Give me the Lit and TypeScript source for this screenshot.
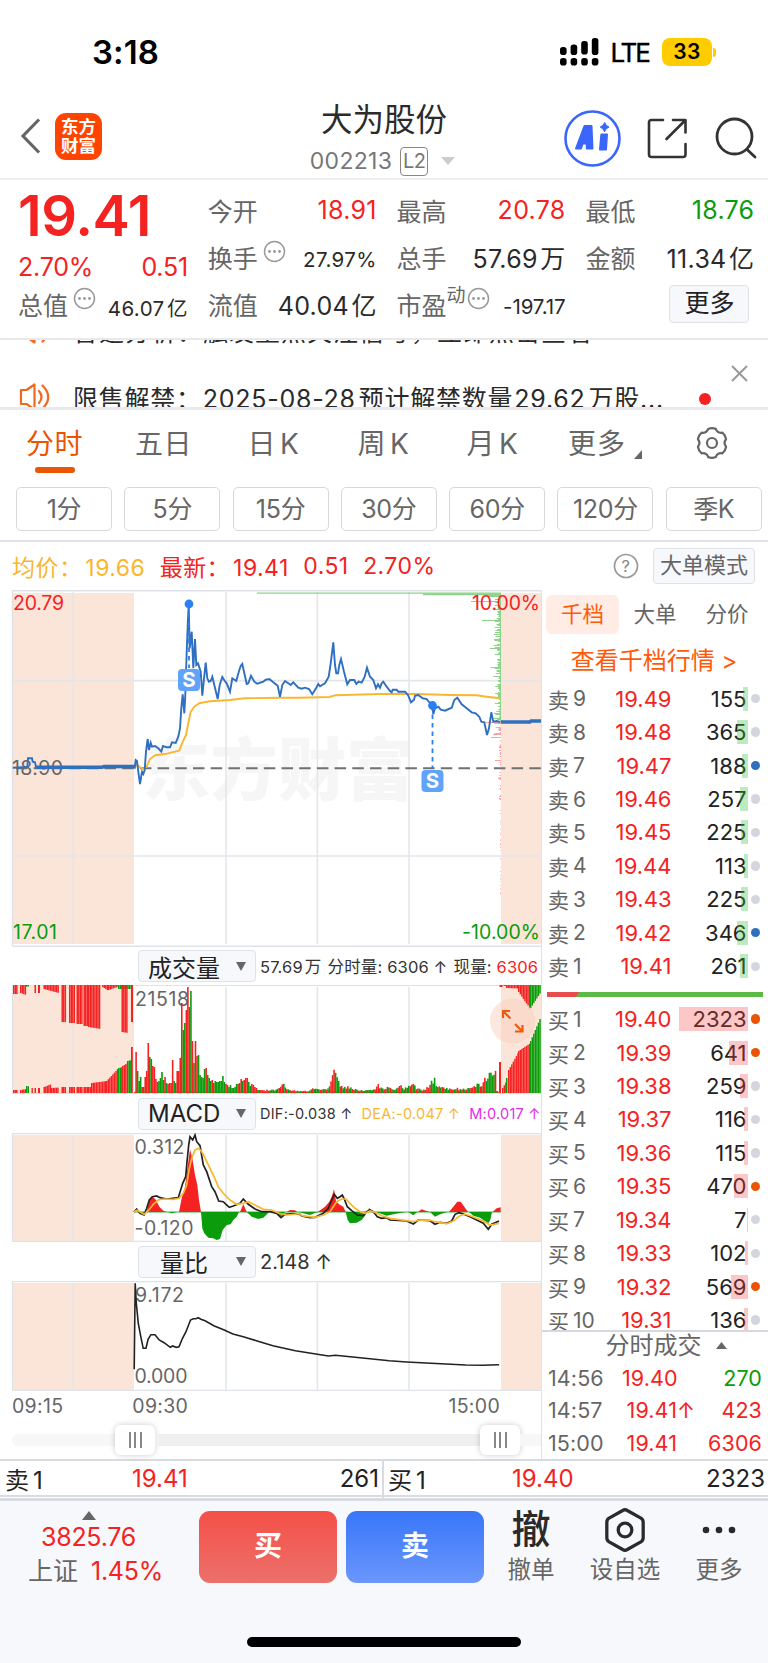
import { LitElement, html, svg, css } from "lit";
import { customElement } from "lit/decorators.js";

type Pt = [number, number];

/* Converts pairs sampled on an enlarged grid into page-space polyline points. */
const pts = (src: string, ox: number, oy: number, sx = 3): string =>
  src
    .trim()
    .split(/\s+/)
    .map((p) => {
      const [x, y] = p.split(",").map(Number);
      return `${(x / sx + ox).toFixed(1)},${(y / 3 + oy).toFixed(1)}`;
    })
    .join(" ");

const noise = (i: number) => {
  const v = Math.sin(i * 127.1 + 11.7) * 43758.5453;
  return v - Math.floor(v);
};

const RED = "#f52222";
const GREEN = "#0a9c0a";

const PRICE =
  pts(
    `38,548 82,546 84,520 96,520 98,530 105,532 108,546 250,547 400,546 404,548 407,525 411,528 415,560 420,597 426,560 430,567 434,555 438,500 443,462
    447,495 452,473 456,485 465,483 475,490 484,500 489,483 500,487 510,487 516,472 527,474 535,455 540,430 544,370 548,328
    553,385 556,330 560,200 564,100 566,60 569,190 575,140 580,250 585,162 589,240 594,235 602,260 607,332 611,290 617,233
    622,280 627,290 632,288 637,275 653,342 659,300 667,276 673,286 680,295 690,320 697,280 709,288 717,258 722,243 727,237
    740,297 745,295 753,272 763,290 772,296 790,290 797,284 808,282 820,292 833,302 840,335 847,300`,
    0, 585,
  ) +
  " " +
  pts(
    `45,288 55,295 62,300 70,292 85,308 95,311 105,308 117,312 127,328 138,310 145,297 150,304 165,295 176,275 182,235 190,172
    195,240 199,265 204,265 208,240 213,222 222,260 232,298 240,285 253,285 259,297 266,290 275,293 284,275 291,248 300,275
    310,285 318,310 324,298 330,308 335,295 340,290 350,305 360,318 365,322 368,314 380,314 385,320 405,320 414,330 423,352
    432,344 435,332 445,330 458,340 470,342 478,352 486,358 490,388 495,370 505,365 512,374 525,377 545,368 553,345 562,338
    575,358 590,370 605,382 617,385 628,395 634,410 643,412 651,450 657,430 664,382 670,410 680,408 690,411`,
    270, 585,
  );

const AVERAGE =
  pts(
    `404,548 410,538 418,545 430,552 440,545 450,522 465,511 500,506 538,497 547,473 558,450 565,415 572,380 583,365 597,355
    630,349 690,345 735,340 840,338 900,338`,
    0, 585,
  ) +
  " " +
  pts("90,338 178,336 195,331 250,329 330,327 440,327 540,330 620,331 650,335 690,340", 270, 585);

const DIF =
  pts(
    `402,801 410,792 420,805 432,810 440,790 448,765 457,755 470,753 480,758 500,762 535,758 548,715 557,695 561,650 566,600
    570,575 578,585 585,570 590,590 600,602 610,660 620,680 635,725 645,740 656,768 670,770 678,778 688,787 700,783 720,775
    730,762 745,778 765,792 785,800 810,800 830,805 843,818 855,808 880,806 900,808`,
    0, 945,
  ) +
  " " +
  pts(
    `95,813 120,818 135,817 160,805 175,790 185,765 193,748 202,760 210,755 217,750 222,760 232,785 245,797 262,810 280,812
    290,800 300,795 310,800 322,815 335,820 350,818 360,825 410,828 430,837 445,825 480,827 495,838 510,832 530,835 545,828
    555,808 567,803 580,807 600,815 620,825 640,835 655,853 665,838 687,828`,
    270, 945,
  );

const DEA =
  pts(
    `402,800 412,796 432,808 445,797 460,778 475,765 490,762 520,763 537,760 550,745 560,720 567,675 575,640 585,615 597,610
    610,628 625,660 640,690 655,725 670,745 690,765 710,778 730,775 745,770 765,780 790,793 815,795 840,806 860,810 900,806`,
    0, 945,
  ) +
  " " +
  pts(
    `95,812 135,817 160,810 180,800 190,785 200,770 215,762 228,762 240,775 255,790 270,800 285,805 300,798 315,802 335,812
    360,820 410,827 430,830 450,825 480,826 495,830 530,836 550,828 570,812 585,808 600,812 640,828 660,840 672,838 687,835`,
    270, 945,
  );

const MACD_AREAS: Array<[string, string]> = [
  [RED, pts("440,801 448,765 458,755 468,765 478,785 490,797 500,801", 0, 945)],
  [GREEN, pts("415,801 430,810 438,801", 0, 945)],
  [GREEN, pts("505,801 515,805 530,801", 0, 945)],
  [RED, pts("537,801 545,760 555,725 565,650 570,613 577,640 585,690 592,720 597,765 603,801", 0, 945)],
  [GREEN, pts("603,801 607,850 613,865 625,878 640,880 650,885 660,882 668,855 680,840 692,838 700,825 710,815 717,801", 0, 945)],
  [RED, pts("720,801 730,778 740,801", 0, 945)],
  [GREEN, pts("740,801 755,815 775,822 790,818 808,801", 0, 945)],
  [GREEN, pts("818,801 843,814 856,801", 0, 945)],
  [RED, pts("50,801 60,795 75,796 82,801", 270, 945)],
  [GREEN, pts("85,801 120,810 142,801", 270, 945)],
  [RED, pts("143,801 165,785 178,770 185,755 192,733 198,768 207,778 220,785 227,801", 270, 945)],
  [GREEN, pts("227,801 233,825 240,835 260,833 275,825 285,812 290,801", 270, 945)],
  [RED, pts("290,801 298,789 306,801", 270, 945)],
  [GREEN, pts("318,801 350,812 370,808 407,801", 270, 945)],
  [GREEN, pts("415,801 430,811 442,801", 270, 945)],
  [RED, pts("443,801 455,793 478,801", 270, 945)],
  [GREEN, pts("480,801 495,815 510,808 532,801", 270, 945)],
  [RED, pts("537,801 550,785 562,770 572,770 583,785 594,801", 270, 945)],
  [GREEN, pts("597,801 610,812 630,818 648,830 655,835 661,825 666,801", 270, 945)],
  [RED, pts("668,801 680,790 692,787 692,801", 270, 945)],
];

const RATIO = pts(
  `386,388 389,130 392,190 398,250 405,290 412,325 420,325 426,298 434,284 446,284 458,300 472,308 490,322 497,318 507,322
  515,320 525,295 535,275 548,240 556,236 564,236 570,233 578,238 590,242 615,257 645,270 670,282 700,290 740,303 785,317
  850,332 913,343 945,348 965,346 1050,355 1120,362 1170,366 1240,370 1340,375 1390,376 1436,374`,
  0, 1240, 2.877,
);

/* Volume bars: height followed by r (up) or g (down), one per minute from the open. */
const OPEN_BARS =
  "41r 22g 12g 16g 6r 6g 16r 22r 50r 36g 34g 27r 26r 14r 11r 12g 15g 21g 13g 16r 10g 9r 10r 10r 33r 12g 10g 22r 22r 35r 90r 63g 70g 83r 106r 86r 102g 52r 30g 52r 37r 38g 18g 16g 15g 24g 25r 18g 15g 12g 13r 10r 12g 11g 11g 12g 12g 17g 11g 9r 8r 6g 8g 5g 5g 6g 9g 9r 10g 14r 12g 13r 15r 15r 11g 7g 9r 8r 6r 5r 3g 3g"
    .split(" ")
    .map((b) => [Number(b.slice(0, -1)), b.endsWith("r")] as [number, boolean]);

const VOLUME_ENVELOPE: Pt[] = [
  [257, 3], [275, 3], [280, 6], [283, 9], [287, 4], [297, 2], [308, 2], [314, 6], [318, 4], [327, 5], [330, 14], [332, 28],
  [334, 18], [336, 17], [339, 8], [347, 6], [352, 5], [360, 3], [374, 4], [377, 9], [380, 5], [388, 6], [394, 3], [400, 8],
  [403, 3], [409, 9], [413, 14], [415, 4], [425, 4], [430, 10], [434, 14], [438, 6], [450, 5], [463, 4], [470, 7], [474, 10],
  [480, 9], [486, 16], [492, 24], [496, 23],
];

const envelope = (x: number) => {
  for (let i = 1; i < VOLUME_ENVELOPE.length; i++) {
    const [x1, y1] = VOLUME_ENVELOPE[i];
    const [x0, y0] = VOLUME_ENVELOPE[i - 1];
    if (x <= x1) return y0 + ((y1 - y0) * (x - x0)) / (x1 - x0);
  }
  return 2;
};

const BASE = 1093;
const bar = (x: number, h: number, c: string, w = 1.6, hang = false) =>
  svg`<rect x=${x.toFixed(2)} y=${hang ? 985 : (BASE - h).toFixed(1)} width=${w} height=${h.toFixed(1)} fill=${c}></rect>`;

const run = (x0: number, x1: number, h0: number, h1: number, c: string, hang = false) => {
  const out = [];
  for (let x = x0; x < x1 - 0.3; x += 1.55) {
    out.push(bar(x, h0 + ((h1 - h0) * (x - x0)) / Math.max(1, x1 - x0), c, 1.45, hang));
  }
  return out;
};

const volumeBars = () => {
  const out: unknown[] = OPEN_BARS.map(([h, up], i) => bar(135.3 + i * 1.523, h, up ? RED : GREEN));
  for (let x = 135.3 + OPEN_BARS.length * 1.523, i = 0; x < 497; x += 1.523, i++) {
    const h = envelope(x) * (0.6 + noise(i) * 0.55);
    const tall = envelope(x) > 12 && x > 480;
    const up = x < 334 && x > 329 ? true : x < 339 && x >= 334 ? false : tall ? noise(i + 500) > 0.75 : noise(i + 90) > 0.5;
    out.push(bar(x, Math.max(1.4, h), up ? RED : GREEN));
  }
  return out;
};

const auctionBars = () => [
  run(13, 17, 9, 9, RED, true), run(20, 25.5, 8, 10, RED, true), run(26, 29, 1.5, 1.5, GREEN, true),
  bar(34.5, 8, RED, 1.5, true), bar(38, 8, RED, 2, true), run(43.5, 58, 4, 8, RED, true),
  run(61.5, 66, 37, 37, RED, true), run(69, 75, 38, 38, RED, true), run(76.5, 82, 39, 39, RED, true),
  run(83.5, 87, 41, 41, RED, true), run(88, 100, 42, 44, RED, true), run(102, 108, 2, 6, RED, true),
  run(108, 118, 5, 1.5, RED, true), run(118, 131, 4, 4, GREEN, true), run(121.5, 127.5, 47, 48, RED, true),
  bar(131, 37, RED, 2, true),
  run(13, 17, 3, 3, RED), run(20, 25.5, 3, 4, RED), run(26, 29, 7, 6.5, GREEN), bar(31.5, 5, RED, 1.4), bar(34.5, 5, RED, 1.5),
  bar(38, 5, RED, 2), run(43.5, 51, 6, 9, RED), run(51, 58, 5, 5.5, RED), run(61.5, 66, 6, 6, RED), run(69, 75, 6, 6, RED),
  run(76.5, 82, 6, 6, RED), run(83.5, 87, 6, 6, RED), run(88, 91, 6, 6, RED), run(91, 106, 10, 12, RED),
  run(106, 118, 12, 25, RED), run(118, 122, 25, 26, GREEN), run(122, 127, 27, 30, RED), run(127, 131, 32, 33, GREEN),
  bar(131, 46, RED, 1.8),
  bar(499, 31, RED, 2), run(502, 506, 5, 12, RED), bar(506, 15, GREEN, 1.5), run(508, 518, 23, 41, RED),
  run(518, 530, 42, 50, RED), run(530, 541, 52, 78, GREEN), run(499.5, 502, 2, 2, RED, true), run(503.5, 506, 1, 1, RED, true),
  run(506, 518, 3, 3.5, RED, true), run(518, 530, 7, 25, RED, true), run(530, 541, 23, 6, GREEN, true),
];

/* Turnover-by-price spikes drawn leftwards from the close line. */
const priceSpikes = () => {
  const out: unknown[] = [];
  const big: Record<number, number> = { 601: 30, 620: 19, 648: 11, 667: 10.5, 713: 7, 722: 18, 734: 8, 737: 10, 760: 6, 778: 3 };
  for (let y = 596; y < 900; y += 1) {
    const fade = y < 722 ? 7 : y < 740 ? 8 : y < 800 ? 2.2 : 0.8;
    const w = big[y] ?? Math.pow(noise(y), 2.4) * fade + (y < 722 ? 1 : 0);
    if (w > 0.35) out.push(svg`<rect x=${501 - w} y=${y} width=${w} height="1" fill=${y < 722 ? "#8cd48c" : "#fba3a3"}></rect>`);
  }
  return out;
};

const vlines = (y0: number, y1: number, xs = [73, 226, 317.4, 409]) =>
  xs.map((x) => svg`<line x1=${x} x2=${x} y1=${y0} y2=${y1} stroke="#e3e6eb" stroke-width="1.6"></line>`);

const washes = (y: number, h: number) => svg`
  <rect x="13" y=${y} width="121" height=${h} fill="#fbe5d9"></rect>
  <rect x="501" y=${y} width="40" height=${h} fill="#fbe5d9"></rect>`;

const label = (s: string, x: number, y: number, w: number, fill = "#666", end = false) =>
  svg`<text x=${end ? x - w : x} y=${y} font-size="19.5" textLength=${w} fill=${fill}>${s}</text>`;

const shared = css`
  :host { display: block; }
  * { box-sizing: border-box; }
  svg { display: block; flex: none; }
`;

@customElement("stock-header")
class StockHeader extends LitElement {
  static styles = [shared, css`
    .status { height: 100px; display: flex; align-items: center; padding: 4px 52px 0 92px; font-weight: 600; }
    .clock { font-size: 33px; letter-spacing: .1px; flex: 1; line-height: 1; }
    .lte { font-size: 26px; font-weight: 400; margin: 0 13px 0 11px; letter-spacing: -2px; -webkit-text-stroke: .4px #000; }
    .battery { width: 50px; height: 28px; border-radius: 8px; background: #ffcc00; text-align: center; line-height: 28px; font-size: 21px; font-weight: 600; letter-spacing: .5px; }
    .nub { width: 3px; height: 9px; margin-left: 1px; border-radius: 0 4px 4px 0; background: #ffcc00; }
    .nav { height: 80px; border-bottom: 2px solid #eee; display: grid; grid-template-columns: 280px 1fr 280px; }
    .left { display: flex; align-items: center; padding: 0 0 8px 20px; gap: 14px; }
    .left svg, .logo { position: relative; top: -1.5px; }
    .logo { width: 47px; height: 47px; border-radius: 11px; background: #ff4400; color: #fff; font-size: 17.5px; font-weight: 700; line-height: 19.5px; text-align: center; padding-top: 4px; }
    .title { text-align: center; color: #333; }
    .name { font-size: 31.5px; line-height: 39px; color: #2b2b2b; padding-right: 0; }
    .code { display: flex; justify-content: center; align-items: center; gap: 8px; height: 44px; color: #777; font-size: 23px; letter-spacing: 0.3px; padding-right: 3px; }
    .l2 { font-size: 20px; width: 28px; height: 29px; border: 1.5px solid #888; border-radius: 4px; line-height: 27px; letter-spacing: -0.5px; }
    .tri { margin-left: 5px; }
    .right { display: flex; align-items: center; padding: 0 0 7px 76px; }
    .share { margin: 0 27px 0 26px; }
  `];
  render() {
    return html`
      <div class="status">
        <div class="clock">3:18</div>
        <svg width="40" height="30" viewBox="0 0 40 30">
          ${[0, 1, 2, 3].map((i) => svg`
            <rect x=${1 + i * 10.6} y=${[10, 7.5, 4, 1][i]} width="6.6" height=${[8, 10.5, 13.5, 17][i]} rx="2.8"></rect>
            <rect x=${1 + i * 10.6} y="21" width="6.6" height="7.5" rx="2.8"></rect>`)}
        </svg>
        <div class="lte">LTE</div>
        <div class="battery">33</div><div class="nub"></div>
      </div>
      <div class="nav">
        <div class="left">
          <svg width="21" height="36" viewBox="0 0 21 36" fill="none" stroke="#666" stroke-width="3.2"><path d="M19 1.5 3 18l16 16.500"></path></svg>
          <div class="logo">东方<br />财富</div>
        </div>
        <div class="title">
          <div class="name">大为股份</div>
          <div class="code"><span>002213</span><span class="l2">L2</span>
            <svg class="tri" width="14" height="8"><path d="M0 0h14l-7 8z" fill="#ccc"></path></svg></div>
        </div>
        <div class="right">
          <svg width="57" height="57" viewBox="0 0 57 57">
            <circle cx="28.500" cy="28.500" r="27" fill="#fff" stroke="#3a66fb" stroke-width="2.600"></circle>
            <g fill="#3a66fb" stroke="#3a66fb" stroke-linejoin="round" stroke-width="2">
              <path fill-rule="evenodd" d="M12 38.500 20.500 16H27.500L28.500 38.500H22.800V33.500H18.600L17 38.500ZM20.400 29H22.700L22.800 24Z"></path>
              <path d="M37.300 24.500H43L42 39.500H36Z"></path>
            </g>
            <path d="M40.700 12.500q1 3.400 4.300 4.600-3.400 1.200-4.500 4.700-1-3.500-4.300-4.700 3.300-1.200 4.500-4.600z" fill="#3a66fb" stroke="#3a66fb"></path>
          </svg>
          <svg class="share" width="41" height="41" viewBox="0 0 41 41" fill="none" stroke="#333" stroke-width="2.600" stroke-linecap="round" stroke-linejoin="round">
            <path d="M16 2H4.500Q2 2 2 4.500V36.500Q2 39 4.500 39H36Q38.500 39 38.500 36.500V26M26 2H38.500V14.500M38 2.500 19.500 21"></path></svg>
          <svg width="43" height="43" viewBox="0 0 43 43" fill="none" stroke="#333" stroke-width="2.800">
            <circle cx="19.500" cy="19.500" r="17.500"></circle><path d="m32 32.500 8 7.500" stroke-linecap="round"></path></svg>
        </div>
      </div>`;
  }
}

@customElement("quote-summary")
class QuoteSummary extends LitElement {
  static styles = [shared, css`
    .grid { height: 160px; border-bottom: 2px solid #e9e9e9; padding: 6.5px 13px 0 18px; display: grid; grid-template-columns: 170px repeat(3, 169px); column-gap: 20px; grid-template-rows: repeat(3, 47px); font-size: 25px; }
    .grid { column-gap: 19.8px; }
    .main { grid-row: 1 / 3; color: #f52222; display: flex; flex-direction: column; }
    .price { font-size: 56px; font-weight: 600; line-height: 56px; letter-spacing: -.4px; margin-top: 1px; }
    .change { display: flex; justify-content: space-between; line-height: 30px; margin-top: 8px; letter-spacing: -0.2px; }
    .cell { display: flex; align-items: center; justify-content: space-between; letter-spacing: .3px; color: #2a2a2a; white-space: nowrap; }
    .key { color: #666; letter-spacing: 0; display: flex; align-items: flex-start; }
    .key svg { margin: 1px 0 0 5px; }
    .sup { font-size: 19px; line-height: 20px; margin-right: -4px; }
    .up { color: #f52222; } .down { color: #0a9c0a; }
    .small { font-size: 20.5px; padding-top: 5px; letter-spacing: .4px; }
    .neg { letter-spacing: -.1px; }
    .unit { margin-left: 2.5px; }
    .more { justify-self: end; align-self: center; margin-right: 5px; width: 80px; height: 38px; border: 1.5px solid #dfe2e8; background: #f6f8fb; border-radius: 4px; text-align: center; line-height: 35px; color: #222; }
  `];
  render() {
    const info = html`<svg width="23" height="23" viewBox="0 0 23 23"><circle cx="11.500" cy="11.500" r="10" fill="none" stroke="#999" stroke-width="1.500"></circle>
      ${[6.5, 11.5, 16.5].map((x) => svg`<circle cx=${x} cy="11.500" r="1.400" fill="#999"></circle>`)}</svg>`;
    const cell = (k: unknown, v: string, cls = "", unit = "") =>
      html`<div class="cell"><span class="key">${k}</span><span class=${cls}>${v}${unit ? html`<span class="unit">${unit}</span>` : ""}</span></div>`;
    return html`<div class="grid">
      <div class="main"><div class="price">19.41</div><div class="change"><span>2.70%</span><span>0.51</span></div></div>
      ${cell("今开", "18.91", "up")}${cell("最高", "20.78", "up")}${cell("最低", "18.76", "down")}
      ${cell(html`换手${info}`, "27.97%", "small")}${cell("总手", "57.69", "", "万")}${cell("金额", "11.34", "", "亿")}
      ${cell(html`总值${info}`, "46.07", "small", "亿")}${cell("流值", "40.04", "", "亿")}
      ${cell(html`市盈<span class="sup">动</span>${info}`, "-197.17", "small neg")}
      <div class="more">更多</div>
    </div>`;
  }
}

@customElement("news-ticker")
class NewsTicker extends LitElement {
  static styles = [shared, css`
    .clip { height: 70px; overflow: hidden; border-bottom: 3px solid #eaeaee; display: grid; grid-template-columns: 1fr 60px; }
    .lines { margin-top: -43.5px; color: #2a2a2a; font-size: 25px; }
    .line { height: 67px; display: flex; align-items: center; padding-left: 19px; gap: 20px; white-space: nowrap; letter-spacing: 1px; }
    .line.second { letter-spacing: .75px; }
    .num { margin: 0 3px 0 1px; }
    .tools { display: flex; flex-direction: column; padding: 25px 0 0 23px; }
    .dot { width: 12px; height: 12px; border-radius: 50%; background: #f52222; margin: 11px 0 0 -32px; }
  `];
  render() {
    const horn = html`<svg width="34" height="28" viewBox="0 0 34 28" fill="none" stroke="#ee6a1f" stroke-width="2.200" stroke-linejoin="round">
      <path d="M2 7h5.500L15.500 1.500v25L7.500 21H2zM20 8q5 6 0 12M23.500 2.500q11.500 11.500 0 23" stroke-linecap="round"></path></svg>`;
    return html`<div class="clip">
      <div class="lines">
        <div class="line">${horn}<span>智选分析：触发重点关注信号，立即点击查看</span></div>
        <div class="line second">${horn}<span>限售解禁：<span class="num">2025-08-28</span>预计解禁数量<span class="num">29.62</span>万股...</span></div>
      </div>
      <div class="tools">
        <svg width="17" height="17" stroke="#999" stroke-width="2"><path d="m1 1 15 15M16 1 1 16"></path></svg>
        <div class="dot"></div>
      </div>
    </div>`;
  }
}

@customElement("period-tabs")
class PeriodTabs extends LitElement {
  static styles = [shared, css`
    .tabs { height: 77px; display: grid; grid-template-columns: 109px 109px 111px 109px 109px 116px 1fr; color: #666; font-size: 28px; letter-spacing: 0.5px; }
    .tab { display: flex; flex-direction: column; align-items: center; padding-top: 17px; line-height: 34px; }
    .tab.on { color: #ea5504; }
    .tab.on::after { content: ""; width: 40px; height: 6px; border-radius: 3px; background: #ea5504; margin-top: 6px; }
    .tab.gear { padding-right: 7px; padding-top: 16px; }
    .row { display: flex; align-items: flex-end; gap: 8px; letter-spacing: 1px; }
    .row svg { margin-bottom: 2px; }
    .k { margin-left: 4px; }
    .chips { display: flex; gap: 12.3px; padding: 0 0 0 16px; height: 55px; border-bottom: 2px solid #e2e3ea; }
    .chip { width: 96px; height: 44px; border: 1.5px solid #d8d8d8; border-radius: 5px; color: #666; font-size: 25px; line-height: 43px; text-align: center; flex: none; letter-spacing: -.3px; }
    .info { height: 48px; display: flex; align-items: center; font-size: 23px; padding: 0 13px 0 12px; color: #f52222; letter-spacing: 0.45px; }
    .avg { color: #fbb62f; }
    .v { margin-left: 3px; }
    .help { margin: 0 14px 0 auto; }
    .mode { width: 102px; height: 36px; background: #f6f8fb; border: 1.5px solid #dfe2e8; border-radius: 4px; color: #666; font-size: 22px; line-height: 33px; text-align: center; letter-spacing: 0; }
    .g { margin-left: 14.5px; }
  `];
  render() {
    const gear: string[] = [];
    for (let i = 0; i < 6; i++) {
      const a = (i * 60 * Math.PI) / 180;
      const p = (r: number, d: number) => `${(16 + r * Math.cos(a + d)).toFixed(1)} ${(16 + r * Math.sin(a + d)).toFixed(1)}`;
      gear.push(`${i ? "L" : "M"}${p(14.6, -0.26)}Q${p(15.6, 0)} ${p(14.6, 0.26)}Q${p(11, 0.52)} ${p(14.6, 0.785)}`);
    }
    const k = (s: string) => html`<div class="tab"><span>${s}<span class="k">K</span></span></div>`;
    return html`
      <div class="tabs">
        <div class="tab on">分时</div><div class="tab">五日</div>${k("日")}${k("周")}${k("月")}
        <div class="tab"><div class="row">更多<svg width="8" height="9"><path d="M8 0v9H0z" fill="#666"></path></svg></div></div>
        <div class="tab gear"><svg width="32" height="34" viewBox="0 -1 32 34" fill="none" stroke="#666" stroke-width="2.200" stroke-linejoin="round">
          <path transform="rotate(30 16 16)" d=${gear.join("") + "Z"}></path><circle cx="16" cy="16" r="5"></circle></svg></div>
      </div>
      <div class="chips">${["1分", "5分", "15分", "30分", "60分", "120分", "季K"].map((c) => html`<div class="chip">${c}</div>`)}</div>
      <div class="info">
        <span class="avg">均价：<span class="v">19.66</span></span><span class="g">最新：<span class="v">19.41</span></span><span class="g">0.51</span><span class="g">2.70%</span>
        <svg class="help" width="26" height="26" viewBox="0 0 26 26"><circle cx="13" cy="13" r="11.500" fill="none" stroke="#999" stroke-width="1.700"></circle>
          <text x="13" y="19" font-size="16.500" text-anchor="middle" fill="#888">?</text></svg>
        <div class="mode">大单模式</div>
      </div>`;
  }
}

@customElement("chart-stack")
class ChartStack extends LitElement {
  static styles = [shared, css`
    :host { width: 542px; border-right: 1.5px solid #dfe2e8; }
    .bar { height: 39px; display: flex; align-items: center; padding-left: 138px; white-space: nowrap; font-size: 17px; color: #333; }
    .bar.first { height: 38px; }
    .pick { width: 118px; height: 32px; border: 1.5px solid #dfe2e8; border-radius: 4px; background: #f6f8fb; display: flex; align-items: center; justify-content: space-between; padding: 0 9px; font-size: 24px; color: #222; margin-right: 4px; letter-spacing: 0; flex: none; }
    .ratio { padding-left: 12px; }
    .gap { margin-left: 6px; }
    .wan { margin-left: 2px; }
    .wide { margin-left: 9px; }
    .red { color: #f52222; } .gold { color: #fbb62f; } .pink { color: #e22ee8; }
    .vol { font-size: 16.5px; letter-spacing: .15px; }
    .macd { font-size: 14.5px; letter-spacing: .25px; }
    .big { font-size: 20px; }
    .axis { height: 29px; display: flex; font-size: 19.5px; color: #666; align-items: center; padding: 1px 41px 0 12px; letter-spacing: 0.3px; }
    .open { margin-left: 69px; flex: 1; }
    .slider { height: 39px; display: flex; align-items: center; padding-left: 12px; }
    .t0, .t1, .t2 { height: 12px; background: #f7f7fa; }
    .t0 { width: 103px; border-radius: 6px 0 0 6px; } .t1 { width: 325px; background: #f0f0f3; } .t2 { width: 21px; }
    .grip { width: 40px; height: 30px; background: #fff; border-radius: 6px; box-shadow: 0 0 6px rgba(0,0,0,.2); display: flex; gap: 3.5px; justify-content: center; align-items: center; }
    .grip i { width: 2px; height: 16px; background: #888; }
  `];
  head(name: string, rest: unknown, cls = "") {
    return html`<div class="bar ${cls === "vol" ? "first" : ""}"><div class="pick"><span class=${name === "量比" ? "ratio" : ""}>${name}</span>
      <svg width="10" height="9"><path d="M0 0h10L5 9z" fill="#666"></path></svg></div><span class=${cls}>${rest}</span></div>`;
  }
  badge(x: number, y: number) {
    return svg`<rect x=${x - 11} y=${y - 11} width="22" height="22" rx="4" fill="#60a3fa"></rect>
      <text x=${x} y=${y + 7.3} font-size="20.500" font-weight="700" text-anchor="middle" fill="#fff">S</text>`;
  }
  render() {
    return html`
      <svg width="541" height="357" viewBox="0 590 541 357">
        ${washes(593, 351)}
        <text x="142" y="795" font-size="68" font-weight="900" textLength="272" fill="#f6f6f6">东方财富</text>
        ${vlines(592, 944)}
        ${[680.6, 856].map((y) => svg`<line x1="13" x2="541" y1=${y} y2=${y} stroke="#e3e6eb" stroke-width="1.600"></line>`)}
        <path d="M12.500 946.500V590.700H541M12.500 946.200H541" fill="none" stroke="#dfe2e8" stroke-width="1.500"></path>
        <path d="M257 593.200H501" stroke="#8cd48c" stroke-width="1.300"></path><path d="M423 594.200H501" stroke="#8cd48c" stroke-width="2"></path>
        <path d="M488 595.500H501" stroke="#8cd48c" stroke-width="3"></path>
        ${priceSpikes()}
        <path d="M16 768.300H541" stroke="#707070" stroke-width="2" stroke-dasharray="11.500 6.200"></path>
        ${label("18.90", 12, 775, 51)}
        <polyline points=${AVERAGE} fill="none" stroke="#fbb62f" stroke-width="1.900" stroke-linejoin="round"></polyline>
        <polyline points=${PRICE} fill="none" stroke="#2f6fc0" stroke-width="1.900" stroke-linejoin="miter"></polyline>
        <path d="M36 767.300H102L104 766.500H134M501 722H530L531 721H541" fill="none" stroke="#2f6fc0" stroke-width="3.400"></path>
        <path d="M189 605V668M432.500 706V768" stroke="#2b7ff5" stroke-width="1.800" stroke-dasharray="4.500 4"></path>
        <circle cx="189" cy="604" r="4.400" fill="#2b7ff5"></circle><circle cx="432.500" cy="705.500" r="4.400" fill="#2b7ff5"></circle>
        ${this.badge(189, 680)}${this.badge(432.5, 781)}
        ${label("20.79", 13, 610, 51, RED)}${label("17.01", 13, 939, 44, GREEN)}
        ${label("10.00%", 540, 610, 68, RED, true)}${label("-10.00%", 540, 939, 78, GREEN, true)}
      </svg>
      ${this.head("成交量", html`57.69<span class="wan">万</span><span class="gap">分时量: 6306 ↑</span><span class="gap">现量: <span class="red">6306</span></span>`, "vol")}
      <svg width="541" height="109" viewBox="0 985 541 109">
        ${washes(985, 108)}${vlines(987, 1093)}
        <path d="M12.500 1094V985.300H541M12 1093.500H541" fill="none" stroke="#dfe2e8" stroke-width="1.200"></path>
        <path d="M134 1092.300H501" stroke=${RED} stroke-width="1"></path>
        ${label("21518", 135, 1006, 54)}
        ${volumeBars()}${auctionBars()}
        <circle cx="512.500" cy="1021" r="22.500" fill="#f8cdb9" fill-opacity=".45"></circle>
        <path d="M503 1018V1011H510M503.500 1011.500 510.500 1018.500M522.500 1025V1031.500H515M522 1031 515 1024" fill="none" stroke="#ee5a10" stroke-width="2.200"></path>
      </svg>
      ${this.head("MACD", html`DIF:-0.038 ↑<span class="gold wide">DEA:-0.047 ↑</span><span class="pink wide">M:0.017 ↑</span>`, "macd")}
      <svg width="541" height="109" viewBox="0 1133 541 109">
        ${washes(1135, 107)}${vlines(1135, 1242)}
        <path d="M12.500 1242V1133.500H541M12 1241.500H541" fill="none" stroke="#dfe2e8" stroke-width="1.300"></path>
        <path d="M134 1212H501" stroke=${GREEN} stroke-width=".8"></path>
        ${MACD_AREAS.map(([c, p]) => svg`<polygon points=${p} fill=${c}></polygon>`)}
        ${label("0.312", 134.5, 1154, 50)}${label("-0.120", 134.5, 1235, 59)}
        <polyline points=${DIF} fill="none" stroke="#222" stroke-width="1.700"></polyline>
        <polyline points=${DEA} fill="none" stroke="#fbb62f" stroke-width="1.700"></polyline>
      </svg>
      ${this.head("量比", "2.148 ↑", "big")}
      <svg width="541" height="110" viewBox="0 1281 541 110">
        ${washes(1283, 107)}${vlines(1283, 1390)}
        <path d="M12.500 1390V1281.500H541M12 1390.500H541" fill="none" stroke="#dfe2e8" stroke-width="1.300"></path>
        ${label("9.172", 135, 1302, 49)}${label("0.000", 134.5, 1383, 53)}
        <polyline points=${RATIO} fill="none" stroke="#222" stroke-width="1.600"></polyline>
      </svg>
      <div class="axis"><span>09:15</span><span class="open">09:30</span><span>15:00</span></div>
      <div class="slider"><div class="t0"></div><div class="grip"><i></i><i></i><i></i></div><div class="t1"></div>
        <div class="grip"><i></i><i></i><i></i></div><div class="t2"></div></div>`;
  }
}

type Level = [string, string, number, string];

@customElement("order-book")
class OrderBook extends LitElement {
  static styles = [shared, css`
    :host { width: 226px; color: #222; font-size: 22px; height: 869px; }
    .tabs { height: 49px; display: flex; align-items: center; padding-left: 4px; color: #666; font-size: 21.5px; }
    .tabs span { width: 74px; text-align: center; line-height: 39px; }
    .tabs .on { background: #ffece4; color: #ff5a0a; border-radius: 6px; width: 73px; }
    .tabs .mid { margin: 0 -2px 0 -1px; }
    .link { height: 43px; text-align: center; line-height: 43px; font-size: 24px; color: #ff5a0a; padding-right: 2px; }
    .side { display: block; }
    .lv { height: 33.45px; display: grid; grid-template-columns: 53.5px 70px 75px 1fr; align-items: center; padding-left: 6px; }
    .tag { color: #666; font-size: 21px; display: flex; gap: 4px; align-items: center; }
    .tag b { font-weight: 400; font-size: 21px; letter-spacing: 0; }
    .px { color: #f52222; text-align: right; letter-spacing: 0; }
    .qty { height: 24px; line-height: 24px; text-align: right; display: grid; justify-items: end; letter-spacing: 0; }
    .qty > * { grid-area: 1 / 1; }
    .fill { height: 24px; width: var(--w); background: rgba(62, 190, 62, .33); margin-right: -1px; }
    .buy .fill { background: rgba(247, 70, 70, .3); }
    .dot { width: 9.400px; height: 9.400px; border-radius: 50%; background: #d3d6dd; margin-left: 4px; }
    .dot.b { background: #2f6fc0; } .dot.o { background: #ea5504; }
    .split { height: 5px; margin: 9px 5px 5.500px; background: linear-gradient(120deg, #e84c4c 14.500%, #5bb946 14.700%); }
    .buy { height: 328px; overflow: hidden; }
    .cap { height: 31px; border-top: 2px solid #d5d8e0; display: flex; align-items: center; justify-content: center; gap: 14px; font-size: 24px; color: #666; padding: 0 0 2px 22px; line-height: 1; }
    .tick { height: 32.600px; display: grid; grid-template-columns: 74px 55px 16px 1fr; padding: 0 6px 0 6px; align-items: center; font-size: 21.500px; color: #666; letter-spacing: .1px; }
    .r { color: #f52222; } .gr { color: #0a9c0a; } .end { text-align: right; }
    .tick .r { text-align: right; }
  `];
  sells: Level[] = [
    ["9", "19.49", 155, ""], ["8", "19.48", 365, ""], ["7", "19.47", 188, "b"], ["6", "19.46", 257, ""], ["5", "19.45", 225, ""],
    ["4", "19.44", 113, ""], ["3", "19.43", 225, ""], ["2", "19.42", 346, "b"], ["1", "19.41", 261, ""],
  ];
  buys: Level[] = [
    ["1", "19.40", 2323, "o"], ["2", "19.39", 641, "o"], ["3", "19.38", 259, ""], ["4", "19.37", 116, ""], ["5", "19.36", 115, ""],
    ["6", "19.35", 470, "o"], ["7", "19.34", 7, ""], ["8", "19.33", 102, ""], ["9", "19.32", 569, "o"], ["10", "19.31", 136, ""],
  ];
  level(side: string, [n, p, q, d]: Level) {
    return html`<div class="lv"><span class="tag">${side}<b>${n}</b></span><span class="px">${p}</span>
      <span class="qty"><span>${q}</span><i class="fill" style=${`--w:${((q / 2323) * 69).toFixed(1)}px`}></i></span><i class="dot ${d}"></i></div>`;
  }
  render() {
    return html`
      <div class="tabs"><span class="on">千档</span><span class="mid">大单</span><span>分价</span></div>
      <div class="link">查看千档行情 &gt;</div>
      <div class="side">${this.sells.map((l) => this.level("卖", l))}</div>
      <div class="split"></div>
      <div class="side buy">${this.buys.map((l) => this.level("买", l))}</div>
      <div class="cap">分时成交<svg width="11" height="7"><path d="M0 7h11L5.500 0z" fill="#666"></path></svg></div>
      <div class="tick"><span>14:56</span><span class="r">19.40</span><span></span><span class="gr end">270</span></div>
      <div class="tick"><span>14:57</span><span class="r">19.41</span><span class="r">↑</span><span class="r end">423</span></div>
      <div class="tick"><span>15:00</span><span class="r">19.41</span><span></span><span class="r end">6306</span></div>`;
  }
}

@customElement("trade-footer")
class TradeFooter extends LitElement {
  static styles = [shared, css`
    .best { height: 42px; border-top: 2px solid #d9dbe3; display: grid; grid-template-columns: 382px 1fr; border-bottom: 3px solid #d9dbe3; box-shadow: inset 0 -1px #fff, inset 0 -3px #d9dbe3; font-size: 24px; }
    .half { display: grid; grid-template-columns: 127px 1fr 1fr; align-items: center; padding: 0 3px 2px 5px; color: #222; letter-spacing: 0; border-left: 2px solid #d9dbe3; }
    .half.first { border-left: 0; }
    .half + .half { grid-template-columns: 124px 1fr 1fr; padding-left: 4px; }
    .half u { text-decoration: none; margin-left: 4px; }
    .red { color: #f52222; } .end { text-align: right; }
    .dock { background: #f6f8fb; height: 163px; display: flex; padding: 10px 0 0; align-items: flex-start; }
    .index { width: 180px; margin-right: 19px; text-align: center; font-size: 25px; letter-spacing: -.25px; line-height: 34px; color: #f52222; display: flex; flex-direction: column; align-items: center; }
    .index svg { margin: 0 3px 0 0; }
    .index .a { margin: 0 3px 0 0; }
    .index .b { padding-left: 11px; }
    .index em { font-style: normal; color: #666; letter-spacing: 0; margin-right: 13px; }
    .cta { width: 138px; height: 72px; border-radius: 11px; color: #fff; font-size: 28px; font-weight: 700; line-height: 71px; text-align: center; margin-right: 9px; }
    .cta.buy { background: linear-gradient(#f45048, #ec706a); } .cta.sell { background: linear-gradient(#3876f8, #6b96fd); }
    .act { width: 94px; text-align: center; font-size: 23.500px; color: #666; display: flex; flex-direction: column; align-items: center; }
    .act.first { width: 76px; margin-right: 9px; }
    .act svg { margin-top: -1px; }
    .glyph { height: 39px; line-height: 35px; font-size: 39px; color: #2a2a2a; font-weight: 500; }
    .act span { line-height: 36px; margin-top: 2px; }
    .home { width: 274px; height: 10px; border-radius: 5px; background: #000; margin: -27px auto 0; }
  `];
  render() {
    return html`
      <div class="best">
        <div class="half first"><span>卖<u>1</u></span><span class="red">19.41</span><span class="end">261</span></div>
        <div class="half"><span>买<u>1</u></span><span class="red">19.40</span><span class="end">2323</span></div>
      </div>
      <div class="dock">
        <div class="index"><svg width="14" height="9"><path d="M0 9h14L7 0z" fill="#666"></path></svg>
          <div class="a">3825.76</div><div class="b"><em>上证</em>1.45%</div></div>
        <div class="cta buy">买</div><div class="cta sell">卖</div>
        <div class="act first"><div class="glyph">撤</div><span>撤单</span></div>
        <div class="act"><svg width="44" height="40" viewBox="0 -2 44 44" overflow="visible" fill="none" stroke="#2a2a2a" stroke-width="3.600" stroke-linejoin="round">
          <path d="M19.500-1.500Q22-3 24.500-1.500L39.500 7Q42 8.500 42 11.500V28.500Q42 31.500 39.500 33L24.500 41.500Q22 43 19.500 41.500L4.500 33Q2 31.500 2 28.500V11.500Q2 8.500 4.500 7Z"></path><circle cx="22" cy="20" r="7.500"></circle></svg><span>设自选</span></div>
        <div class="act"><svg width="36" height="40" fill="#2a2a2a"><circle cx="5" cy="20" r="3.300"></circle><circle cx="18" cy="20" r="3.300"></circle><circle cx="31" cy="20" r="3.300"></circle></svg><span>更多</span></div>
      </div>
      <div class="home"></div>`;
  }
}

@customElement("app-root")
class AppRoot extends LitElement {
  static styles = [shared, css`
    :host { width: 768px; height: 1663px; overflow: hidden; background: #fff; font-family: Inter, "Noto Sans CJK SC", sans-serif; font-feature-settings: "calt" 0; color: #000; }
    .body { display: grid; grid-template-columns: 542px 226px; height: 869px; }
  `];
  render() {
    return html`<stock-header></stock-header><quote-summary></quote-summary><news-ticker></news-ticker><period-tabs></period-tabs>
      <div class="body"><chart-stack></chart-stack><order-book></order-book></div>
      <trade-footer></trade-footer>`;
  }
}
